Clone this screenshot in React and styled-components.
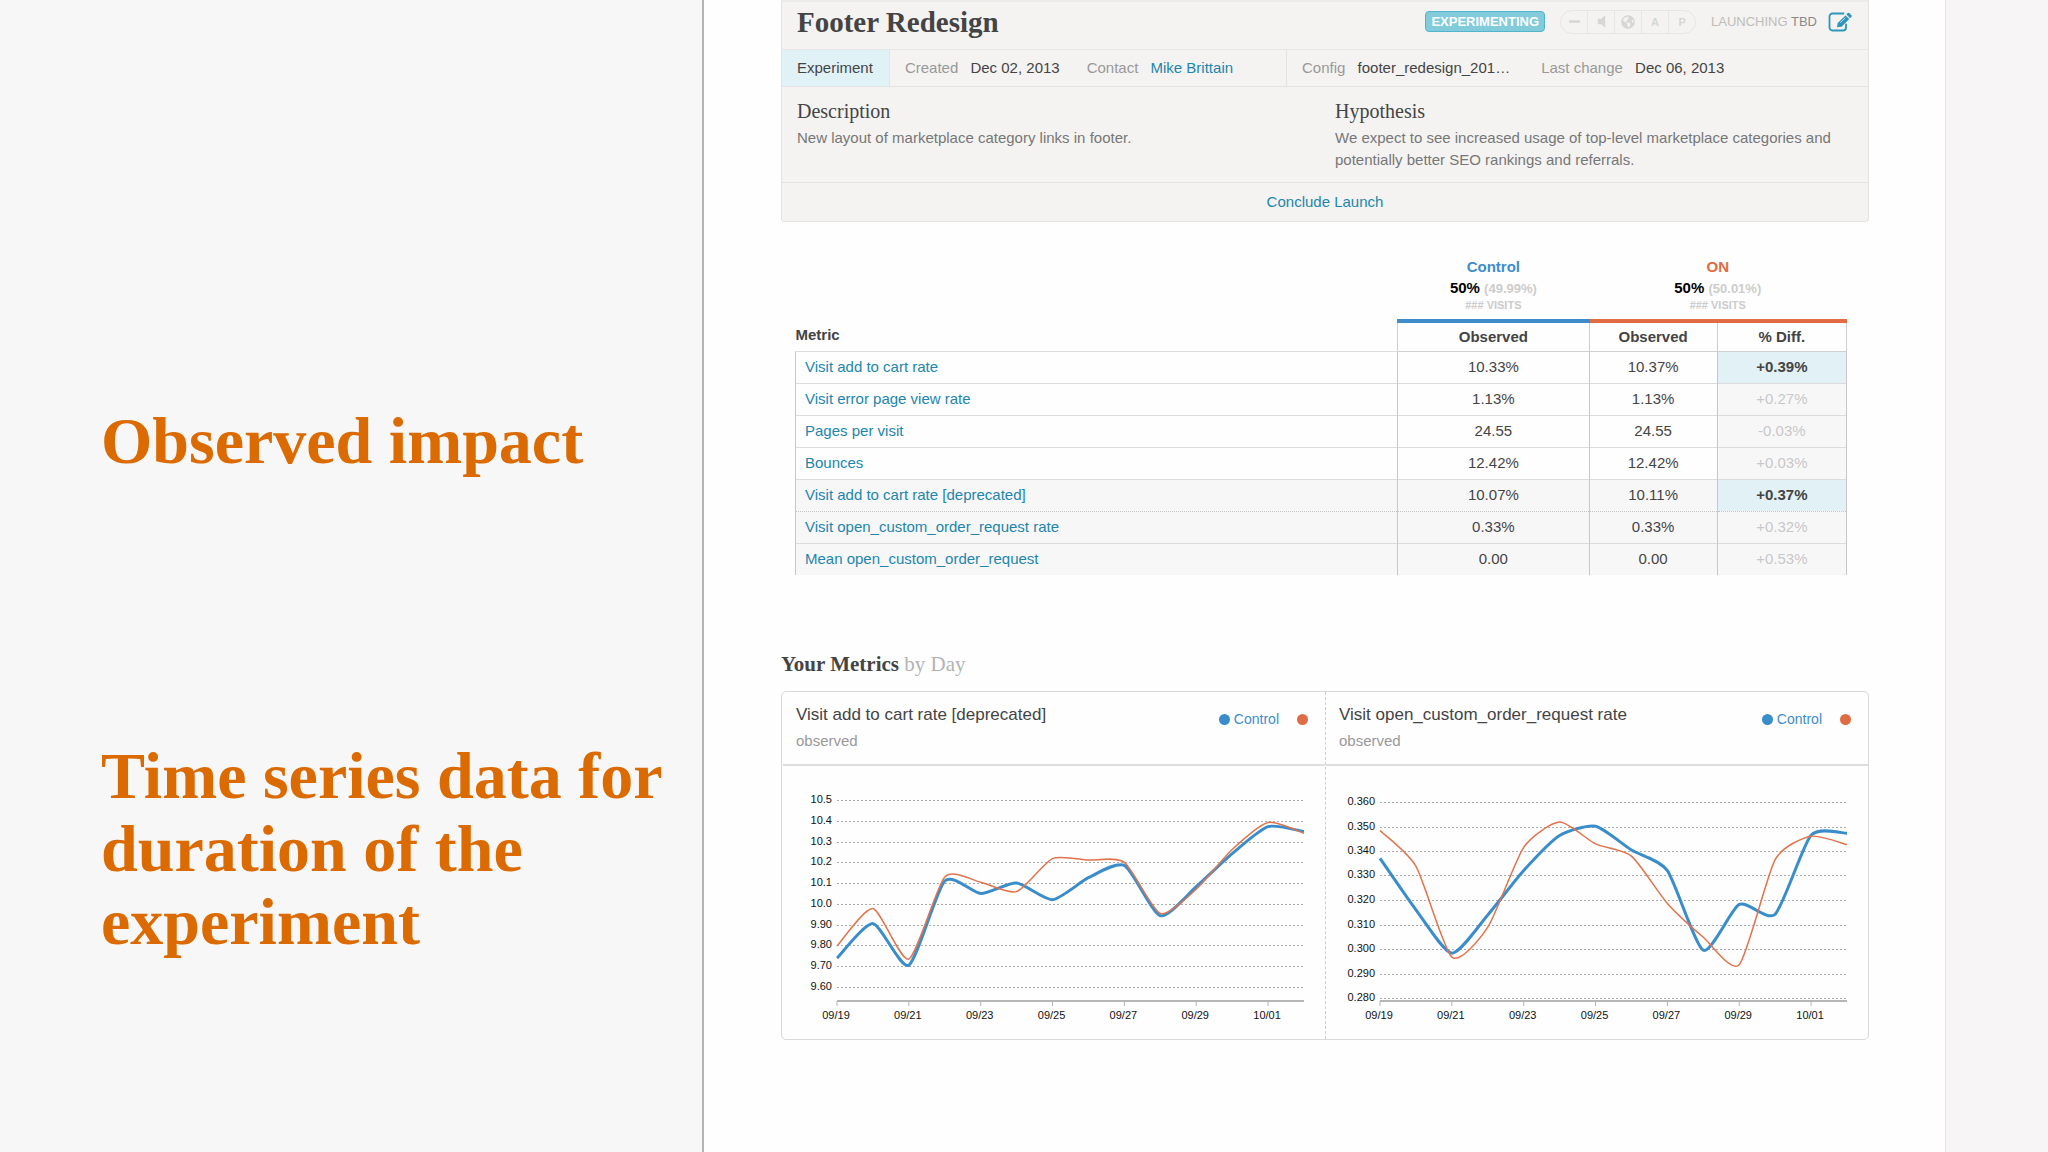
import styled, { createGlobalStyle } from 'styled-components';
import { FaGlobeAmericas, FaMinus, FaVolumeOff } from 'react-icons/fa';

const BLUE = '#3f8ccb';
const ORANGE = '#e06c43';

const rows = [
    { name: 'Visit add to cart rate', control: '10.33%', on: '10.37%', diff: '+0.39%', hit: true },
    { name: 'Visit error page view rate', control: '1.13%', on: '1.13%', diff: '+0.27%' },
    { name: 'Pages per visit', control: '24.55', on: '24.55', diff: '-0.03%' },
    { name: 'Bounces', control: '12.42%', on: '12.42%', diff: '+0.03%' },
    { name: 'Visit add to cart rate [deprecated]', control: '10.07%', on: '10.11%', diff: '+0.37%', hit: true, shaded: true, dotted: true },
    { name: 'Visit open_custom_order_request rate', control: '0.33%', on: '0.33%', diff: '+0.32%', shaded: true },
    { name: 'Mean open_custom_order_request', control: '0.00', on: '0.00', diff: '+0.53%', shaded: true },
];

const days = ['09/19', '09/21', '09/23', '09/25', '09/27', '09/29', '10/01'];

const charts = [
    {
        title: 'Visit add to cart rate [deprecated]',
        labels: ['10.5', '10.4', '10.3', '10.2', '10.1', '10.0', '9.90', '9.80', '9.70', '9.60'],
        top: 34,
        bottom: 221,
        control: [9.739, 9.905, 9.705, 10.11, 10.05, 10.1, 10.02, 10.126, 10.185, 9.943, 10.083, 10.242, 10.372, 10.348],
        on: [9.797, 9.978, 9.734, 10.129, 10.104, 10.059, 10.218, 10.211, 10.2, 9.954, 10.071, 10.262, 10.392, 10.34],
    },
    {
        title: 'Visit open_custom_order_request rate',
        labels: ['0.360', '0.350', '0.340', '0.330', '0.320', '0.310', '0.300', '0.290', '0.280'],
        top: 36,
        bottom: 232,
        control: [0.337, 0.316, 0.2983, 0.3139, 0.332, 0.3463, 0.3501, 0.3404, 0.332, 0.2995, 0.3182, 0.3142, 0.3464, 0.3472],
        on: [0.3484, 0.3338, 0.2967, 0.3089, 0.3415, 0.3518, 0.3429, 0.3379, 0.3186, 0.3048, 0.2936, 0.3365, 0.346, 0.3426],
    },
];

const LEFT = 54;
const RIGHT = 521;
const AXIS = 235;
const SMOOTHING = 0.11;

// cardinal spline through all points
function curve(points) {
    const last = points.length - 1;
    const tangents = points.map((p, i) => {
        const a = points[Math.max(i - 1, 0)];
        const b = points[Math.min(i + 1, last)];
        return [(b[0] - a[0]) * SMOOTHING, (b[1] - a[1]) * SMOOTHING];
    });
    let d = `M${points[0]}`;
    for (let i = 1; i <= last; i++) {
        const [x0, y0] = points[i - 1];
        const [x1, y1] = points[i];
        const [s, t] = [tangents[i - 1], tangents[i]];
        d += `C${x0 + s[0]},${y0 + s[1]} ${x1 - t[0]},${y1 - t[1]} ${x1},${y1}`;
    }
    return d;
}

function Chart({ title, labels, top, bottom, control, on }) {
    const max = Number(labels[0]);
    const min = Number(labels[labels.length - 1]);
    const dx = (RIGHT - LEFT) / (control.length - 1);
    const y = (v) => top + ((max - v) / (max - min)) * (bottom - top);
    const line = (values) => curve(values.map((v, i) => [LEFT + i * dx, y(v)]));

    return (
        <Plot viewBox="0 0 542 273" role="img" aria-label={title}>
            {labels.map((label) => (
                <g key={label}>
                    <GridLine x1={LEFT} x2={RIGHT} y1={Math.round(y(label)) + 0.5} y2={Math.round(y(label)) + 0.5} />
                    <Tick x={49} y={Math.round(y(label)) + 3} textAnchor="end">{label}</Tick>
                </g>
            ))}
            <path d={`M${LEFT} ${AXIS}H${RIGHT}`} stroke="#b5b5b5" strokeWidth="2" />
            {days.map((day, i) => (
                <g key={day}>
                    <path d={`M${LEFT + i * 2 * dx} ${AXIS}v5`} stroke="#b5b5b5" />
                    <Tick x={LEFT + i * 2 * dx - 1} y={253} textAnchor="middle">{day}</Tick>
                </g>
            ))}
            <path d={line(control)} fill="none" stroke="#3a8dcb" strokeWidth="3" strokeLinejoin="round" />
            <path d={line(on)} fill="none" stroke="#e0734c" strokeWidth="1.5" strokeLinejoin="round" />
        </Plot>
    );
}

function EditIcon() {
    return (
        <svg width="25" height="20" viewBox="0 0 25 20" fill="#2e95bd">
            <path
                d="M18 12.5v3a3 3 0 0 1-3 3H4.5a3 3 0 0 1-3-3v-11a3 3 0 0 1 3-3h11"
                fill="none"
                stroke="#2e95bd"
                strokeWidth="1.8"
                strokeLinecap="round"
            />
            <path d="M9 15.3 9.7 11l7.8-7.6 3.8 3.7-7.7 7.6Z" />
            <path d="m18.4 2.5 1.2-1.2a1.3 1.3 0 0 1 1.8 0l1.9 1.9a1.3 1.3 0 0 1 0 1.8l-1.2 1.2Z" />
            <path d="m12.2 10.8 5.2-5.1" stroke="#d6ebf1" strokeWidth="0.8" />
        </svg>
    );
}

function Summary() {
    return (
        <Card>
            <CardTop>
                <Title>Footer Redesign</Title>
                <Status>
                    <Badge>EXPERIMENTING</Badge>
                    <Platforms>
                        <Platform type="button" aria-label="None"><FaMinus size={13} /></Platform>
                        <Platform type="button" aria-label="Announce"><FaVolumeOff size={15} /></Platform>
                        <Platform type="button" aria-label="Global"><FaGlobeAmericas size={14} /></Platform>
                        <Platform type="button">A</Platform>
                        <Platform type="button">P</Platform>
                    </Platforms>
                    <Launch>LAUNCHING <b>TBD</b></Launch>
                    <EditButton type="button" aria-label="Edit"><EditIcon /></EditButton>
                </Status>
            </CardTop>
            <Facts>
                <FactGroup>
                    <Kind>Experiment</Kind>
                    <Fact>Created <span>Dec 02, 2013</span></Fact>
                    <Fact>Contact <Link href="#contact">Mike Brittain</Link></Fact>
                </FactGroup>
                <FactGroup $divided>
                    <Fact>Config <span>footer_redesign_201…</span></Fact>
                    <Fact>Last change <span>Dec 06, 2013</span></Fact>
                </FactGroup>
            </Facts>
            <Notes>
                <div>
                    <NoteTitle>Description</NoteTitle>
                    <Note>New layout of marketplace category links in footer.</Note>
                </div>
                <div>
                    <NoteTitle>Hypothesis</NoteTitle>
                    <Note>We expect to see increased usage of top-level marketplace categories and potentially better SEO rankings and referrals.</Note>
                </div>
            </Notes>
            <CardFoot>
                <Link href="#conclude">Conclude Launch</Link>
            </CardFoot>
        </Card>
    );
}

function Results() {
    return (
        <Table>
            <colgroup>
                <col />
                <Col $width="18.2%" />
                <Col $width="12.2%" />
                <Col $width="12.3%" />
            </colgroup>
            <thead>
                <tr>
                    <td />
                    <Variant $color={BLUE} scope="col">
                        <VariantName>Control</VariantName>
                        <Share>50% <small>(49.99%)</small></Share>
                        <Visits>### VISITS</Visits>
                    </Variant>
                    <Variant $color={ORANGE} scope="col" colSpan={2}>
                        <VariantName>ON</VariantName>
                        <Share>50% <small>(50.01%)</small></Share>
                        <Visits>### VISITS</Visits>
                    </Variant>
                </tr>
                <tr>
                    <MetricHead scope="col">Metric</MetricHead>
                    <Head scope="col">Observed</Head>
                    <Head scope="col">Observed</Head>
                    <Head scope="col">% Diff.</Head>
                </tr>
            </thead>
            <tbody>
                {rows.map((row) => (
                    <Row key={row.name} $shaded={row.shaded} $dotted={row.dotted}>
                        <MetricCell><Link href="#metric">{row.name}</Link></MetricCell>
                        <Cell>{row.control}</Cell>
                        <Cell>{row.on}</Cell>
                        <Diff $hit={row.hit}>{row.diff}</Diff>
                    </Row>
                ))}
            </tbody>
        </Table>
    );
}

export default function App() {
    return (
        <Page>
            <GlobalStyle />
            <Aside>
                <Callout>Observed impact</Callout>
                <Callout>Time series data for duration of the experiment</Callout>
            </Aside>
            <Main>
                <Summary />
                <Results />
                <SectionTitle>Your Metrics <span>by Day</span></SectionTitle>
                <Panels>
                    {charts.map((chart) => (
                        <Panel key={chart.title}>
                            <PanelHead>
                                <div>
                                    <PanelTitle>{chart.title}</PanelTitle>
                                    <PanelSub>observed</PanelSub>
                                </div>
                                <Legend>
                                    <Dot $color="#3a8dcb" />
                                    <LegendName>Control</LegendName>
                                    <Dot $color={ORANGE} />
                                </Legend>
                            </PanelHead>
                            <Chart {...chart} />
                        </Panel>
                    ))}
                </Panels>
            </Main>
            <Gutter />
        </Page>
    );
}

const GlobalStyle = createGlobalStyle`
    * {
        box-sizing: border-box;
    }
    body {
        margin: 0;
        background: #f7f7f7;
        color: #444;
        font: 15px/22px "Liberation Sans", Arial, sans-serif;
    }
    h1, h2, h3, p {
        margin: 0;
    }
    button {
        border: 0;
        padding: 0;
        background: none;
        font: inherit;
        cursor: pointer;
    }
`;

const Page = styled.div`
    display: grid;
    grid-template-columns: 704fr 1241fr 103fr;
    min-height: 100vh;
`;
const Aside = styled.aside`
    display: flex;
    flex-direction: column;
    gap: 262px;
    padding: 404px 24px 0 101px;
    background: #f7f7f7;
`;
const Callout = styled.h2`
    color: #db6a00;
    font: bold 66px/73px "Liberation Serif", "Times New Roman", serif;
`;
const Main = styled.main`
    padding: 0 76px 0 77px;
    border-left: 2px solid #b4b4b4;
    background: #fefefe;
    margin-left: -2px;
`;
const Gutter = styled.div`
    border-left: 1px solid #e6e4e5;
    background: #f7f5f6;
`;

const Card = styled.section`
    border: 1px solid #e4e3e1;
    border-top: 2px solid #ebebea;
    border-radius: 0 0 4px 4px;
    background: #f4f3f1;
`;
const CardTop = styled.header`
    display: flex;
    justify-content: space-between;
    align-items: center;
    height: 48px;
    padding: 0 15px 8px;
    border-bottom: 1px solid #e8e7e5;
`;
const Title = styled.h1`
    font: bold 29px/36px "Liberation Serif", "Times New Roman", serif;
`;
const Status = styled.div`
    display: flex;
    align-items: center;
`;
const Badge = styled.span`
    padding: 0 5px;
    border: 1px solid #53b5cb;
    border-radius: 4px;
    background: #82cbdb;
    color: #fff;
    font-size: 13px;
    font-weight: bold;
    line-height: 19px;
`;
const Platforms = styled.div`
    display: flex;
    width: 136px;
    margin: 0 15px;
    border: 1px solid #e6e6e3;
    border-radius: 12px;
`;
const Platform = styled.button`
    display: flex;
    flex: 1;
    justify-content: center;
    align-items: center;
    height: 22px;
    color: #d6d6d3;
    font-size: 11px;
    font-weight: bold;

    & + & {
        border-left: 1px solid #e6e6e3;
    }
`;
const Launch = styled.span`
    margin-right: 11px;
    color: #bdbdba;
    font-size: 13px;

    b {
        color: #8a8a88;
        font-weight: normal;
    }
`;
const EditButton = styled.button`
    display: flex;
`;

const Facts = styled.div`
    display: flex;
    border-bottom: 1px solid #e3e2e0;
`;
const FactGroup = styled.div`
    display: flex;
    gap: ${({ $divided }) => ($divided ? '4px' : '0')};
    width: ${({ $divided }) => ($divided ? 'auto' : '504px')};
    border-left: ${({ $divided }) => ($divided ? '1px solid #e3e2e0' : '0')};
    white-space: nowrap;
`;
const Kind = styled.span`
    padding: 7px 16px 7px 15px;
    border-right: 1px solid #dbe9ec;
    background: #e0f2f6;
`;
const Fact = styled.span`
    padding: 7px 12px 7px 15px;
    color: #999;

    span,
    a {
        margin-left: 8px;
    }
    span {
        color: #444;
    }
`;
const Link = styled.a`
    color: #2286ab;
    text-decoration: none;
`;
const Notes = styled.div`
    display: grid;
    grid-template-columns: 538px 1fr;
    height: 96px;
    padding: 10px 15px 0;
    border-bottom: 1px solid #e3e2e0;
    color: #777;
`;
const NoteTitle = styled.h2`
    margin-bottom: 2px;
    color: #444;
    font: 20px/28px "Liberation Serif", "Times New Roman", serif;
`;
const Note = styled.p`
    line-height: 22px;
`;
const CardFoot = styled.footer`
    padding: 8px 0;
    text-align: center;
`;

const Table = styled.table`
    width: calc(100% - 36px);
    margin: 34px 0 0 14px;
    border-collapse: collapse;
    table-layout: fixed;
    text-align: center;
`;
const Col = styled.col`
    width: ${({ $width }) => $width};
`;
const Variant = styled.th`
    padding: 0 0 8px;
    border-bottom: 4px solid ${({ $color }) => $color};
    color: ${({ $color }) => $color};
`;
const VariantName = styled.div`
    line-height: 22px;
`;
const Share = styled.div`
    color: #000;
    line-height: 20px;

    small {
        color: #ccc;
        font-size: 13px;
    }
`;
const Visits = styled.div`
    color: #ccc;
    font-size: 11px;
    line-height: 12px;
`;
const Head = styled.th`
    height: 30px;
    padding: 0;
    border: solid #d0cfd0;
    border-width: 0 1px 1px;
`;
const MetricHead = styled.th`
    padding: 0 0 2px;
    border-bottom: 1px solid #dddbdc;
    text-align: left;
`;
const Row = styled.tr`
    height: 32px;
    border-bottom: 1px ${({ $dotted }) => ($dotted ? 'dotted #c4c4c4' : 'solid #dddbdc')};
    background: ${({ $shaded }) => ($shaded ? '#f8f7f8' : 'transparent')};

    &:last-child {
        border-bottom: 0;
    }
`;
const Cell = styled.td`
    padding: 0;
    border: solid #c8c7c8;
    border-width: 0 1px;
`;
const MetricCell = styled(Cell)`
    padding-left: 9px;
    text-align: left;
`;
const Diff = styled(Cell)`
    background: ${({ $hit }) => ($hit ? '#e1f1f5' : '#f8f7f8')};
    color: ${({ $hit }) => ($hit ? '#444' : '#c8c8c8')};
    font-weight: ${({ $hit }) => ($hit ? 'bold' : 'normal')};
`;

const SectionTitle = styled.h2`
    margin: 74px 0 12px;
    font: bold 21px/30px "Liberation Serif", "Times New Roman", serif;

    span {
        color: #b3b3b3;
        font-weight: normal;
    }
`;
const Panels = styled.section`
    display: grid;
    grid-template-columns: 1fr 1fr;
    border: 1px solid #dad8da;
    border-radius: 5px;
`;
const Panel = styled.article`
    border-left: 1px dashed #d0ced0;

    &:first-child {
        border-left-color: transparent;
    }
`;
const PanelHead = styled.header`
    display: flex;
    justify-content: space-between;
    align-items: flex-start;
    height: 74px;
    padding: 10px 17px 0 13px;
    border-bottom: 2px solid #dedcde;
`;
const PanelTitle = styled.h3`
    font-size: 17px;
    font-weight: normal;
    line-height: 26px;
`;
const PanelSub = styled.p`
    color: #999;
    line-height: 26px;
`;
const Legend = styled.div`
    display: flex;
    align-items: center;
    margin-top: 6px;
`;
const Dot = styled.span`
    width: 11px;
    height: 11px;
    border-radius: 50%;
    background: ${({ $color }) => $color};
`;
const LegendName = styled.span`
    margin: 0 18px 0 4px;
    color: ${BLUE};
    font-size: 14px;
    line-height: 22px;
`;
const Plot = styled.svg`
    display: block;
    width: 100%;
    height: auto;
`;
const GridLine = styled.line`
    stroke: #aaa;
    stroke-dasharray: 2 2;
`;
const Tick = styled.text`
    fill: #111;
    font-size: 11px;
`;
